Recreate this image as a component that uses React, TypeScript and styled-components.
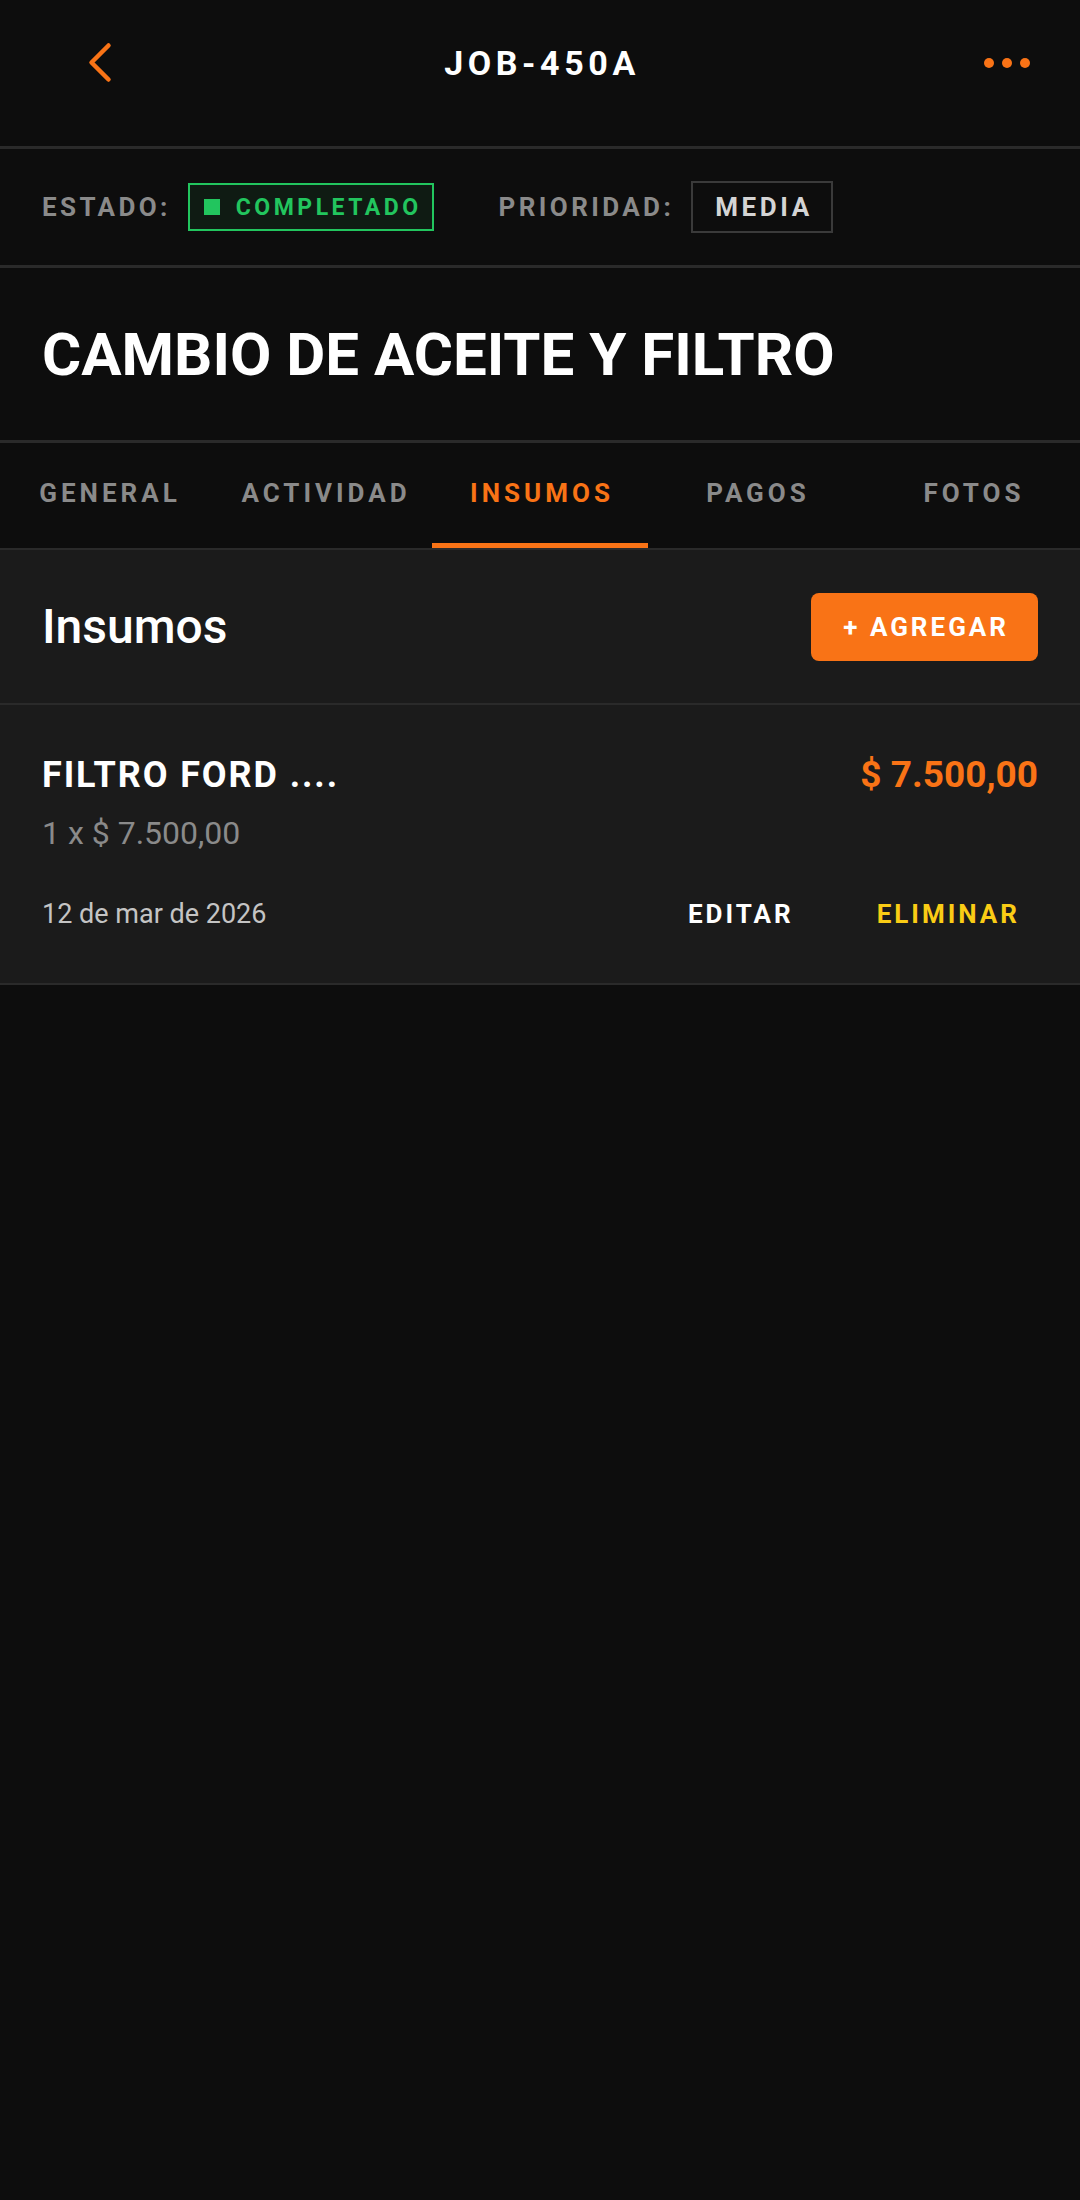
import styled, { createGlobalStyle } from "styled-components";

const GlobalStyle = createGlobalStyle`
  * {
    box-sizing: border-box;
  }

  body {
    margin: 0;
    background: #0d0d0d;
    font-family: Roboto, "Liberation Sans", sans-serif;
    color: #ffffff;
  }
`;

const tabs = ["GENERAL", "ACTIVIDAD", "INSUMOS", "PAGOS", "FOTOS"];

type Supply = {
  id: number;
  name: string;
  qty: number;
  unitPrice: string;
  total: string;
  date: string;
};

const supplies: Supply[] = [
  {
    id: 1,
    name: "FILTRO FORD ....",
    qty: 1,
    unitPrice: "$ 7.500,00",
    total: "$ 7.500,00",
    date: "12 de mar de 2026",
  },
];

const BackIcon = () => (
  <svg width="26" height="42" viewBox="0 0 26 42" fill="none">
    <polyline
      points="21.5,3.5 4.5,20.5 21.5,37.5"
      stroke="#f97316"
      strokeWidth="4.5"
      strokeLinecap="round"
      strokeLinejoin="round"
    />
  </svg>
);

const MoreIcon = () => (
  <svg width="46" height="10" viewBox="0 0 46 10" fill="#f97316">
    <circle cx="5" cy="5" r="5" />
    <circle cx="23" cy="5" r="5" />
    <circle cx="41" cy="5" r="5" />
  </svg>
);

export default function App() {
  const activeTab = "INSUMOS";

  return (
    <Page>
      <GlobalStyle />
      <Header>
        <HeaderSide $inset>
          <IconButton aria-label="Volver">
            <BackIcon />
          </IconButton>
        </HeaderSide>
        <HeaderTitle>JOB-450A</HeaderTitle>
        <HeaderSide $align="end">
          <IconButton aria-label="Más opciones">
            <MoreIcon />
          </IconButton>
        </HeaderSide>
      </Header>

      <StatusBar>
        <MetaLabel>ESTADO:</MetaLabel>
        <StatusBadge>
          <StatusDot />
          COMPLETADO
        </StatusBadge>
        <MetaLabel $spaced>PRIORIDAD:</MetaLabel>
        <PriorityBadge>MEDIA</PriorityBadge>
      </StatusBar>

      <TitleSection>
        <JobTitle>CAMBIO DE ACEITE Y FILTRO</JobTitle>
      </TitleSection>

      <TabBar>
        {tabs.map((tab) => (
          <Tab key={tab} $active={tab === activeTab}>
            {tab}
          </Tab>
        ))}
      </TabBar>

      <SectionHeader>
        <SectionTitle>Insumos</SectionTitle>
        <AddButton>+ AGREGAR</AddButton>
      </SectionHeader>

      {supplies.map((item) => (
        <SupplyCard key={item.id}>
          <CardTop>
            <SupplyName>{item.name}</SupplyName>
            <SupplyTotal>{item.total}</SupplyTotal>
          </CardTop>
          <SupplyQty>
            {item.qty} x {item.unitPrice}
          </SupplyQty>
          <CardFooter>
            <SupplyDate>{item.date}</SupplyDate>
            <Actions>
              <ActionButton>EDITAR</ActionButton>
              <ActionButton $danger>ELIMINAR</ActionButton>
            </Actions>
          </CardFooter>
        </SupplyCard>
      ))}
    </Page>
  );
}

const Page = styled.div`
  min-height: 2200px;
  background: #0d0d0d;
`;

const Header = styled.header`
  display: grid;
  grid-template-columns: 1fr auto 1fr;
  align-items: center;
  height: 149px;
  padding: 0 50px 20px;
  border-bottom: 3px solid #2a2a2a;
`;

const HeaderSide = styled.div<{ $align?: "end"; $inset?: boolean }>`
  display: flex;
  justify-content: ${({ $align }) => ($align === "end" ? "flex-end" : "flex-start")};
  padding-left: ${({ $inset }) => ($inset ? "37px" : "0")};
`;

const IconButton = styled.button`
  display: flex;
  align-items: center;
  justify-content: center;
  padding: 0;
  border: none;
  background: none;
  cursor: pointer;
`;

const HeaderTitle = styled.h1`
  margin: 0;
  padding-left: 4px;
  font-size: 34px;
  font-weight: 700;
  letter-spacing: 4.6px;
  line-height: 40px;
  color: #ffffff;
`;

const StatusBar = styled.div`
  display: flex;
  align-items: center;
  height: 119px;
  padding: 0 42px;
  border-bottom: 3px solid #2a2a2a;
`;

const MetaLabel = styled.span<{ $spaced?: boolean }>`
  margin-left: ${({ $spaced }) => ($spaced ? "65px" : "0")};
  margin-right: 17px;
  font-size: 26px;
  font-weight: 700;
  letter-spacing: 3.4px;
  color: #8a8a8a;
`;

const StatusBadge = styled.span`
  display: flex;
  align-items: center;
  gap: 16px;
  height: 48px;
  padding: 0 10px 0 14px;
  border: 2px solid #22c55e;
  background: #0f1b13;
  font-size: 23px;
  font-weight: 700;
  letter-spacing: 3.5px;
  color: #22c55e;
`;

const StatusDot = styled.span`
  width: 16px;
  height: 16px;
  background: #22c55e;
`;

const PriorityBadge = styled.span`
  display: flex;
  align-items: center;
  height: 52px;
  padding: 0 18px 0 22px;
  border: 2px solid #3a3a3a;
  font-size: 26px;
  font-weight: 700;
  letter-spacing: 3.6px;
  color: #d4d4d4;
`;

const TitleSection = styled.section`
  display: flex;
  align-items: center;
  height: 175px;
  padding: 2px 42px 0;
  border-bottom: 3px solid #2a2a2a;
`;

const JobTitle = styled.h2`
  margin: 0;
  font-size: 60px;
  font-weight: 700;
  line-height: 72px;
  color: #ffffff;
`;

const TabBar = styled.nav`
  display: flex;
  border-bottom: 2px solid #2a2a2a;
`;

const Tab = styled.button<{ $active?: boolean }>`
  flex: 1;
  height: 105px;
  padding: 0 0 0 4px;
  border: none;
  border-bottom: 5px solid ${({ $active }) => ($active ? "#f97316" : "transparent")};
  background: none;
  font-family: inherit;
  font-size: 26px;
  font-weight: 700;
  letter-spacing: 4px;
  color: ${({ $active }) => ($active ? "#f97316" : "#8a8a8a")};
  cursor: pointer;
`;

const SectionHeader = styled.div`
  display: flex;
  align-items: center;
  justify-content: space-between;
  height: 155px;
  padding: 0 42px;
  background: #1b1b1b;
  border-bottom: 2px solid #2a2a2a;
`;

const SectionTitle = styled.h3`
  margin: 0;
  font-size: 48px;
  font-weight: 500;
  line-height: 56px;
  color: #ffffff;
`;

const AddButton = styled.button`
  height: 68px;
  padding: 0 29px 0 32px;
  border: none;
  border-radius: 8px;
  background: #f97316;
  font-family: inherit;
  font-size: 26px;
  font-weight: 700;
  letter-spacing: 3px;
  color: #ffffff;
  cursor: pointer;
`;

const SupplyCard = styled.article`
  padding: 48px 42px 41px;
  background: #1b1b1b;
  border-bottom: 2px solid #2a2a2a;
`;

const CardTop = styled.div`
  display: flex;
  justify-content: space-between;
  align-items: baseline;
`;

const SupplyName = styled.span`
  font-size: 36px;
  font-weight: 700;
  line-height: 44px;
  letter-spacing: 1.9px;
  color: #ffffff;
`;

const SupplyTotal = styled.span`
  font-size: 37px;
  font-weight: 700;
  line-height: 44px;
  color: #f97316;
`;

const SupplyQty = styled.div`
  margin-top: 16px;
  font-size: 32px;
  line-height: 40px;
  color: #8a8a8a;
`;

const CardFooter = styled.div`
  display: flex;
  align-items: center;
  justify-content: space-between;
  margin-top: 33px;
`;

const SupplyDate = styled.span`
  font-size: 27px;
  line-height: 32px;
  color: #c4c4c4;
`;

const Actions = styled.div`
  display: flex;
  gap: 47px;
`;

const ActionButton = styled.button<{ $danger?: boolean }>`
  padding: 12px 18px;
  border: none;
  background: none;
  font-family: inherit;
  font-size: 26px;
  font-weight: 700;
  line-height: 32px;
  letter-spacing: 3px;
  color: ${({ $danger }) => ($danger ? "#facc15" : "#ffffff")};
  cursor: pointer;
`;
